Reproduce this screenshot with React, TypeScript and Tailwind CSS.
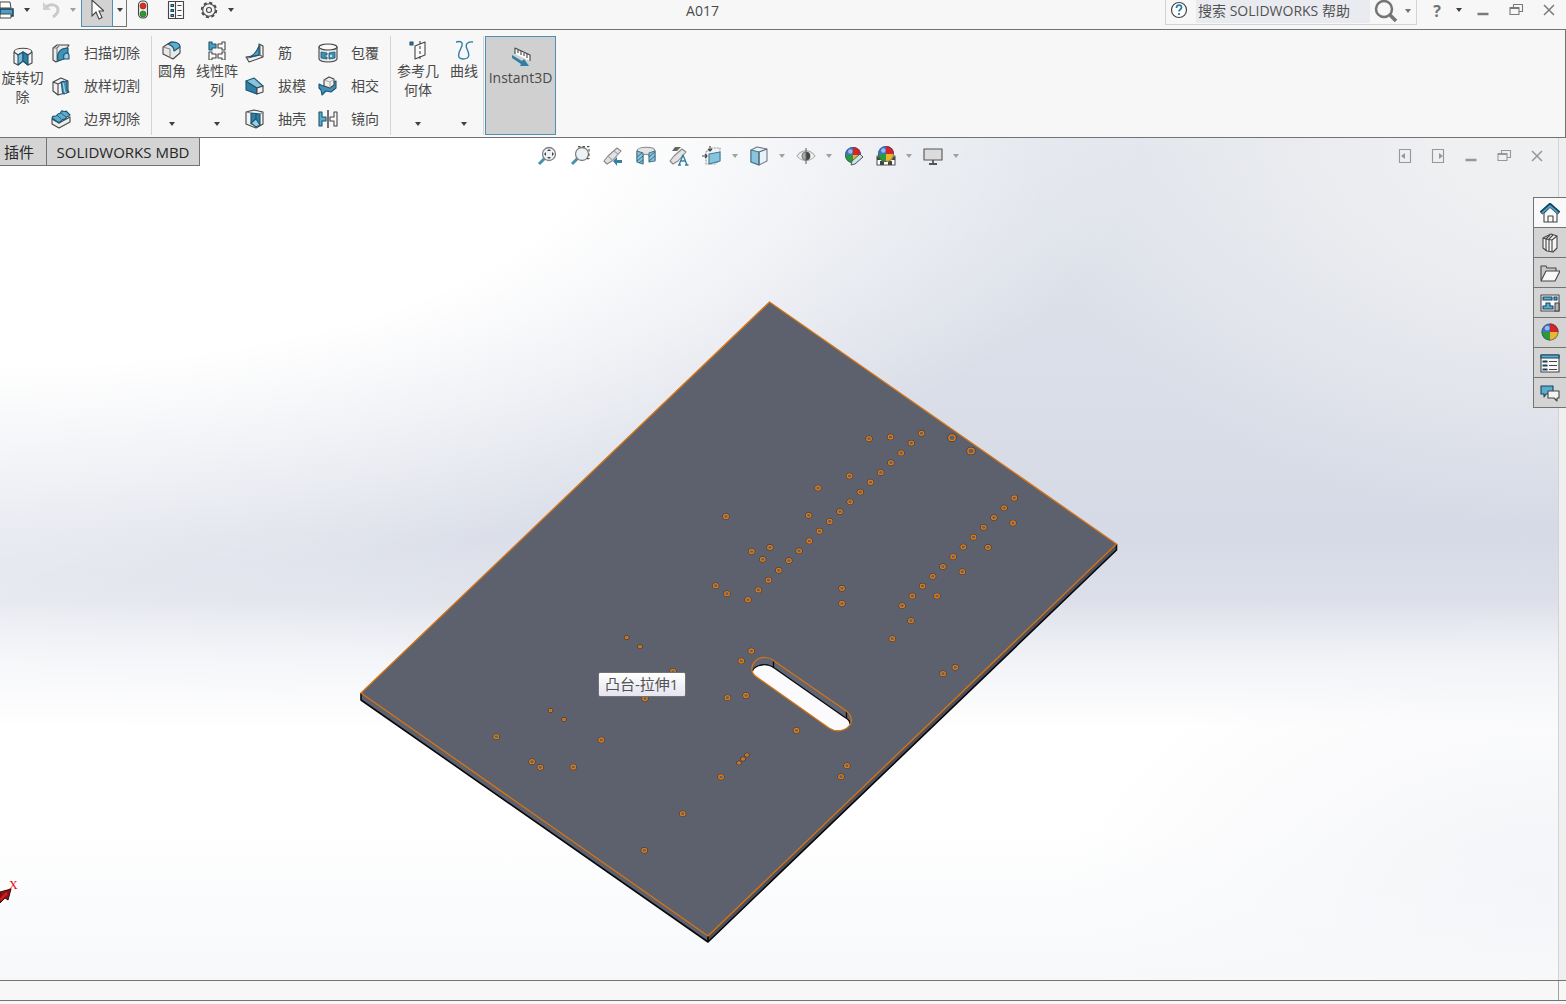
import { useState } from 'react';
import type { ReactNode } from 'react';

interface IconProps {
  size?: string;
  children: ReactNode;
}

// All glyphs are drawn on a 20 x 20 grid
function Glyph({ size = 'w-5 h-5', children }: IconProps) {
  return (
    <svg viewBox="0 0 20 20" className={`${size} shrink-0`} fill="none" stroke="#454545" strokeWidth="1.1" strokeLinejoin="round" aria-hidden="true">
      {children}
    </svg>
  );
}

function Caret({ color = 'text-neutral-700' }: { color?: string }) {
  return (
    <svg viewBox="0 0 6 4" className={`w-[6px] h-1 shrink-0 ${color}`} aria-hidden="true">
      <path d="M0 0h6L3 4z" fill="currentColor" />
    </svg>
  );
}

const RevolveCut = () => (
  <Glyph>
    <path d="M1 5v11l4 2 5-4 5 4 4-2V5c0-5-18-5-18 0z" fill="#f2f2f2" />
    <path d="M1 5l4 3 5-3 5 3 4-3" />
    <path d="M10 5v9l-5 4V8z" fill="#7db9d6" stroke="#1d5470" />
    <path d="M10 5l5 3v10l-5-4z" fill="#2f7ea3" stroke="#1d5470" />
  </Glyph>
);

const SweepCut = () => (
  <Glyph>
    <path d="M2 5l4-3h12l-2 3v3c-5 0-8 3-7 9l-4 2-3-2z" fill="#ececec" />
    <path d="M2 5h4l2-2M6 5v13" stroke="#777" />
    <path d="M7 18C5 9 10 5 17 5v5c-4 0-5 2-4 6z" fill="#3f92b8" stroke="#1d5470" />
    <path d="M13 16c-1-4 0-6 4-6l1 2v4z" fill="#9ccde3" stroke="#1d5470" />
  </Glyph>
);

const LoftCut = () => (
  <Glyph>
    <path d="M2 6l8-4 7 3v11l-3 1-7 2-5-4z" fill="#f2f2f2" />
    <path d="M2 6l5 2v11M7 8l6-3" />
    <path d="M10 6l6-1v9l2 2-5 2c-3-1-1-6-3-12z" fill="#3f92b8" stroke="#1d5470" />
    <path d="M12 7c2 4 0 8 3 10" stroke="#a9d5e8" />
  </Glyph>
);

const BoundaryCut = () => (
  <Glyph>
    <path d="M1 10l7 4 11-6v5l-11 6-7-4z" fill="#eeeeee" />
    <path d="M1 9c1-4 3 0 5-3s3 0 4-3 3 1 5-1l4 4c-2 3-3 0-4 3s-3 0-4 2-2 1-3 3z" fill="#5dabcf" stroke="#1d5470" />
    <path d="M6 6l4 4m0-6l5 4" stroke="#1d5470" strokeWidth=".8" />
  </Glyph>
);

const Fillet = () => (
  <Glyph>
    <path d="M1 7l8-5c6 0 9 3 9 6v5l-7 6-10-5z" fill="#e8e8e8" />
    <path d="M1 7l7 2v9" stroke="#888" />
    <path d="M6 4l4-2c5 0 8 2 8 5l-6 4c0-4-2-5-6-7z" fill="#5dabcf" stroke="#1d5470" />
  </Glyph>
);

const LinearPattern = () => (
  <Glyph>
    <path d="M2 2h3v2h4v4H5v2H2z" fill="#4e9fc3" stroke="#1d5470" />
    <path d="M18 2h-3v2h-4v4h4v2h3zM2 12h3v2h4v4H5v2H2zM18 12h-3v2h-4v4h4v2h3z" fill="#fbfbfb" />
  </Glyph>
);

const Rib = () => (
  <Glyph>
    <path d="M1 14l3 5 14-5V3l-4-2v11z" fill="#f2f2f2" />
    <path d="M1 14l2 1 12-3V2M15 12l3 2" stroke="#666" />
    <path d="M5 14c4-2 7-6 9-11v9z" fill="#4e9fc3" stroke="#1d5470" />
  </Glyph>
);

const Draft = () => (
  <Glyph>
    <path d="M1 5v9l11 4V12z" fill="#2f7ea3" stroke="#1d5470" />
    <path d="M1 5l8-3 9 8-6 2z" fill="#8ac3dc" stroke="#1d5470" />
    <path d="M12 12l6-2v6l-6 2z" fill="#f4f4f4" />
  </Glyph>
);

const Shell = () => (
  <Glyph>
    <path d="M1 3l8-2 9 2v12l-7 4-10-4z" fill="#f2f2f2" />
    <path d="M6 4l9 1v11l-4-3-5 2z" fill="#2f7ea3" stroke="#1d5470" />
    <path d="M6 14l5-4 4 6-4 2zM11 4v6" fill="#9ccde3" stroke="#1d5470" />
    <path d="M1 3l5 1M18 3l-3 2" stroke="#888" />
  </Glyph>
);

const Wrap = () => (
  <Glyph>
    <path d="M1 4v12c2 4 16 4 18 0V4z" fill="#e8e8e8" />
    <ellipse cx="10" cy="4" rx="9" ry="3" fill="#fafafa" />
    <path d="M3 9l6 1v2H7v2h2v2l-6-1zM11 10l6-1v6l-6 1z" fill="#3f92b8" stroke="#1d5470" strokeWidth=".8" />
    <path d="M13 12v2" stroke="#fff" strokeWidth="1.500" />
  </Glyph>
);

const Intersect = () => (
  <Glyph>
    <path d="M1 8l4 2 8-3 5-2v7l-5 4-5-1-4 4-1-5-2-2z" fill="#3f92b8" stroke="#1d5470" />
    <path d="M6 4l5-3 5 2v6l-4 3-6-2z" fill="#efefef" />
    <path d="M6 4l6 2 4-3M12 6v6" stroke="#999" strokeWidth=".8" />
  </Glyph>
);

const Mirror = () => (
  <Glyph>
    <path d="M1 3h3v5h4v4H4v5H1z" fill="#5dabcf" stroke="#1d5470" />
    <path d="M10 1v18" strokeWidth="1.5" />
    <path d="M19 3h-3v5h-4v4h4v5h3z" fill="#fafafa" />
  </Glyph>
);

const ReferenceGeometry = () => (
  <Glyph>
    <path d="M7 6l10-4v13L7 19z" fill="#fafafa" />
    <path d="M12 1v19" strokeDasharray="3 2" />
    <path d="M2 2h3v3H2z" fill="#2f7ea3" stroke="#1d5470" />
  </Glyph>
);

const Curves = () => (
  <Glyph>
    <path d="M2 2c7-2 7 2 5 6s-5 11 2 11c8 0 6-6 4-10s0-8 6-7" stroke="#2f7ea3" strokeWidth="1.4" />
  </Glyph>
);

const Instant = () => (
  <Glyph>
    <path d="M4 7V1l15 7v6" fill="#fafafa" />
    <path d="M7 3v3M10 4v4M13 6v3M16 7v4" />
    <path d="M1 8l10 6 2-2 5 7h-9l1-2-9-6z" fill="#2f7ea3" stroke="none" />
  </Glyph>
);

const Lens = ({ children }: { children?: ReactNode }) => (
  <Glyph>
    <path d="M8 12l-6 6" stroke="#4a8fb0" strokeWidth="3" />
    <circle cx="12" cy="8" r="6.5" fill="#edf2f5" stroke="#808080" strokeWidth="1.300" />
    {children}
  </Glyph>
);

const ZoomFit = () => (
  <Lens>
    <path d="M12 3l2 2h-4zM12 13l2-2h-4zM7 8l2-2v4zM17 8l-2-2v4z" fill="#444" stroke="none" />
  </Lens>
);

const ZoomArea = () => (
  <Lens>
    <path d="M8 .6h11v12h-2" stroke="#555" strokeDasharray="2.500 2" />
  </Lens>
);

const PreviousView = () => (
  <Glyph>
    <path d="M1 15l4-5 9-8 4 3-9 10-5 3z" fill="#e2e2e2" stroke="#888" />
    <path d="M5 10l4 4M11 5l4 3" stroke="#aaa" />
    <path d="M10 15l4-4v3h5v3h-5v3z" fill="#3a7fa0" stroke="none" />
  </Glyph>
);

const SectionView = () => (
  <Glyph>
    <path d="M1 5c0-5 18-5 18 0v9l-5 1-1-6c-2-1-4-1-6 0v8l-6-2z" fill="#e4e4e4" stroke="#888" />
    <path d="M1 5l6 2v11l-6-2zM13 7l6-2v10l-6 1z" fill="#8ac3dc" stroke="#46788f" />
    <path d="M1 11l5-4M1 15l6-5M3 17l4-3M13 11l6-5M13 15l6-5" stroke="#2f6782" strokeWidth=".9" />
  </Glyph>
);

const AnnotationView = () => (
  <Glyph>
    <path d="M1 15l4-5 8-7 4 3-8 9-5 3z" fill="#e2e2e2" stroke="#888" />
    <path d="M6 1h6l-4 4H3z" fill="#666" stroke="none" />
    <path d="M10 19l4-10 4 10M11.500 15h5M9 19h3M16 19h3.500" stroke="#3a7fa0" strokeWidth="1.400" />
  </Glyph>
);

const ViewOrientation = () => (
  <Glyph>
    <path d="M4 6l6-4h8v12l-5 4H4z" fill="#f2f2f2" stroke="#999" strokeDasharray="2 1" />
    <path d="M7 8l11-2v9L7 18z" fill="#8ac3dc" stroke="#3a7fa0" />
    <path d="M8 0v5M6 3l2 2 2-2M0 10h5M3 8l2 2-2 2" stroke="#444" />
  </Glyph>
);

const DisplayStyle = () => (
  <Glyph>
    <path d="M2 4l6-3 10 2v12l-8 4-8-3z" fill="#e6f3f9" stroke="#778" />
    <path d="M2 4l8 2v13l-8-3z" fill="#8ac3dc" stroke="#46788f" />
    <path d="M10 6l8-3M10 6v13" stroke="#567" />
  </Glyph>
);

const HideShow = () => (
  <Glyph>
    <path d="M1 10c5-7 13-7 18 0-5 6-13 6-18 0z" fill="#f2f2f2" stroke="#aaa" />
    <circle cx="10" cy="10" r="4" fill="#a8a8a8" stroke="#777" />
    <path d="M10 6a4 4 0 010 8z" fill="#444" stroke="none" />
    <path d="M10 2v16" stroke="#666" />
  </Glyph>
);

const Ball = ({ r = 9, cy = 10 }: { r?: number; cy?: number }) => (
  <g stroke="none" transform={`translate(10 ${cy}) scale(${r / 9})`}>
    <circle r="9" fill="#3d74d0" />
    <path d="M0 0V-9A9 9 0 019 0z" fill="#d3262b" />
    <path d="M0 0H9A9 9 0 010 9z" fill="#eab62c" />
    <path d="M0 0V9A9 9 0 01-9 0z" fill="#2a9a3c" />
    <circle cx="-3" cy="-4" r="2.500" fill="#fff" opacity=".5" />
    <circle r="8.500" fill="none" stroke="#444" opacity=".5" />
  </g>
);

const EditAppearance = () => (
  <Glyph>
    <Ball r={8} cy={9} />
    <path d="M8 19l1-4 8-7 3 3-8 7z" fill="#c9e5f1" stroke="#555" strokeWidth="1" />
  </Glyph>
);

const ApplyScene = () => (
  <Glyph>
    <path d="M1 10h18v9H1z" fill="#fff" stroke="#555" />
    <path d="M1 11h4v3H1zM15 11h4v3h-4zM4 15h4v4H4zM12 15h4v4h-4z" fill="#444" stroke="none" />
    <Ball r={8} cy={8} />
  </Glyph>
);

const ViewSettings = () => (
  <Glyph>
    <path d="M1 3h18v11H1z" fill="#dcdcdc" stroke="#555" />
    <path d="M10 14v4M6 18h8" stroke="#555" strokeWidth="1.800" />
  </Glyph>
);

const Home = () => (
  <Glyph>
    <path d="M4 10v9h13v-9L10 4z" fill="#fafafa" />
    <path d="M8 19v-6h5v6" />
    <path d="M1 10l9-8 9 8" stroke="#17445c" strokeWidth="4" />
    <path d="M2 10l8-7 8 7" stroke="#4e9fc3" strokeWidth="1.800" />
  </Glyph>
);

const DesignLibrary = () => (
  <Glyph>
    <path d="M3 5l8-4 6 2v12l-4 4-6-1-4-3z" fill="#f4f4f4" />
    <path d="M3 5l3 1v12M6 6l4-4M9 6v12M9 6l4-4M12 7v12M12 7l5-4M6 6l6 1" />
  </Glyph>
);

const FileExplorer = () => (
  <Glyph>
    <path d="M1 17V3h5l1 2h9v3" fill="#c8c8c8" />
    <path d="M1 18L6 8h14l-5 10z" fill="#f8f8f8" />
  </Glyph>
);

const ViewPalette = () => (
  <Glyph>
    <path d="M1 2h18v16H1z" fill="#f8f8f8" />
    <path d="M3 4h9v3H3zM14 4h3v3h-3zM6 10h4v3h3v3H3v-3h3z" fill="#5dabcf" stroke="#17445c" />
    <path d="M15 18v-8h4v8z" fill="#b5b5b5" />
  </Glyph>
);

const Appearances = () => (
  <Glyph>
    <Ball r={8.5} cy={9} />
  </Glyph>
);

const CustomProperties = () => (
  <Glyph>
    <path d="M1 2h18v17H1z" fill="#f8f8f8" />
    <path d="M1 2h18v3H1z" fill="#5dabcf" stroke="#17445c" />
    <path d="M3 8h4v1H3zM3 12h4v1H3zM3 16h4v1H3z" fill="#4e9fc3" stroke="#17445c" />
    <path d="M9 8.500h8M9 12.500h8M9 16.500h8" />
  </Glyph>
);

const Forum = () => (
  <Glyph>
    <path d="M1 3h12v8H6l-2 3v-3H1z" fill="#5dabcf" stroke="#17445c" />
    <path d="M8 8h11v7h-2v3l-3-3H8z" fill="#f4f4f4" />
  </Glyph>
);

const cutTools = [
  { label: '扫描切除', icon: SweepCut },
  { label: '放样切割', icon: LoftCut },
  { label: '边界切除', icon: BoundaryCut },
];

const featureTools = [
  { label: '筋', icon: Rib },
  { label: '拔模', icon: Draft },
  { label: '抽壳', icon: Shell },
];

const bodyTools = [
  { label: '包覆', icon: Wrap },
  { label: '相交', icon: Intersect },
  { label: '镜向', icon: Mirror },
];

const viewTools = [
  { label: '整屏显示全图', icon: ZoomFit, menu: false },
  { label: '局部放大', icon: ZoomArea, menu: false },
  { label: '上一视图', icon: PreviousView, menu: false },
  { label: '剖面视图', icon: SectionView, menu: false },
  { label: '动态注解视图', icon: AnnotationView, menu: false },
  { label: '视图定向', icon: ViewOrientation, menu: true },
  { label: '显示样式', icon: DisplayStyle, menu: true },
  { label: '隐藏/显示项目', icon: HideShow, menu: true },
  { label: '编辑外观', icon: EditAppearance, menu: false },
  { label: '应用布景', icon: ApplyScene, menu: true },
  { label: '视图设定', icon: ViewSettings, menu: true },
];

const paneTabs = [
  { label: 'SOLIDWORKS 资源', icon: Home },
  { label: '设计库', icon: DesignLibrary },
  { label: '文件探索器', icon: FileExplorer },
  { label: '视图调色板', icon: ViewPalette },
  { label: '外观、布景和贴图', icon: Appearances },
  { label: '自定义属性', icon: CustomProperties },
  { label: 'SOLIDWORKS Forum', icon: Forum },
];

type Hole = [x: number, y: number, r?: number];

const lineOfHoles = (x: number, y: number, dx: number, dy: number, count: number): Hole[] =>
  Array.from({ length: count }, (_, i) => [x + dx * i, y + dy * i]);

const holes: Hole[] = [
  ...lineOfHoles(921.5, 433.3, -10.2, 9.79, 18),
  ...lineOfHoles(1014.3, 498, -10.2, 9.79, 12),
  [869, 438.7], [890.5, 437], [952, 437.7, 3.2], [971, 451, 3.2], [849.5, 476], [818, 488],
  [808.7, 515.3], [726, 516.5], [751.7, 551.5], [770, 547.3], [762.7, 559.3], [715.7, 585.7],
  [727, 593.7], [842, 588.3], [842, 603.5], [1013, 523], [988, 547.3], [962.3, 571.7],
  [937, 596], [911, 620.7], [626.7, 637.5, 1.4], [640, 646.7, 1.4], [673, 671.5], [645, 698.5],
  [751.3, 651], [741.3, 661], [892.3, 638.7], [955.3, 667.3], [943, 673.7], [727.5, 697.7],
  [746, 695.5], [796.5, 730.5], [601.3, 740], [747, 755, 1.4], [743, 759, 1.4], [739, 763, 1.4],
  [721, 777], [847, 765.7], [841, 776.7], [550.5, 710.5, 1.4], [564, 719.5, 1.4], [496.3, 736.7],
  [532, 761.7], [540.3, 767.3], [573.3, 767], [682.7, 813.7], [644.3, 850.3],
];

function ToolColumn({ tools, width }: { tools: typeof cutTools; width: string }) {
  return (
    <div className={`flex flex-col ${width}`}>
      {tools.map(({ label, icon: Icon }) => (
        <button key={label} className="flex h-[33px] items-center gap-[13px] text-sm">
          <Icon />
          {label}
        </button>
      ))}
    </div>
  );
}

function LargeTool({ label, icon, width, menu = true }: { label: string; icon: ReactNode; width: string; menu?: boolean }) {
  return (
    <button className={`flex h-[99px] flex-col items-center pt-1 text-sm leading-[19px] ${width}`}>
      {icon}
      <span className="mt-px">{label}</span>
      {menu && <span className="mt-auto pb-[9px]"><Caret /></span>}
    </button>
  );
}

function TitleBar() {
  const [query, setQuery] = useState('');

  return (
    <header className="flex h-[30px] shrink-0 items-start border-b border-neutral-500 bg-[#f7f7f7]">
      <div className="flex h-5 items-center">
        <button aria-label="打印" className="w-[14px] overflow-hidden">
          <svg viewBox="0 0 14 20" className="h-5 w-[14px]" aria-hidden="true">
            <path d="M0 2h10l1 6H0z" fill="#fff" stroke="#444" />
            <path d="M0 9h13v7H0z" fill="#4e9fc3" stroke="#17445c" strokeWidth="1.5" />
            <path d="M0 14h11v4H0z" fill="#fff" stroke="#444" />
          </svg>
        </button>
        <button aria-label="打印选项" className="ml-[10px]"><Caret /></button>
        <button aria-label="撤消" className="ml-[11px]">
          <Glyph>
            <path d="M2 2v8h8z" fill="#d0d0d0" stroke="none" />
            <path d="M5 7c5-4 12-2 12 3 0 3-2 5-5 7" stroke="#cacaca" strokeWidth="3" />
          </Glyph>
        </button>
        <button aria-label="撤消列表" className="ml-[9px]"><Caret color="text-neutral-400" /></button>
      </div>
      <div className="ml-[5px] flex h-[27px]">
        <button aria-label="选择" className="flex w-8 justify-center border border-t-0 border-[#4f8fb5] bg-[#d2d2d2]">
          <svg viewBox="0 0 14 20" className="h-5 w-[14px]" aria-hidden="true">
            <path d="M2 0v16l4-4 3 7 3-1.500-3-6.500h5z" fill="#fff" stroke="#444" strokeWidth="1.100" />
          </svg>
        </button>
        <button aria-label="选择选项" className="flex w-[14px] items-start justify-center border-r border-b border-neutral-500 pt-2"><Caret /></button>
      </div>
      <div className="flex h-5 items-center">
        <button aria-label="重建模型" className="ml-[6px]">
          <Glyph>
            <rect x="5.500" y="1" width="9" height="17" rx="4" fill="#e8e8e8" />
            <circle cx="10" cy="6" r="3" fill="#d8321c" stroke="#8b1a10" strokeWidth=".6" />
            <circle cx="10" cy="14" r="3" fill="#2f9a2f" stroke="#1b601b" strokeWidth=".6" />
          </Glyph>
        </button>
        <button aria-label="文件属性" className="ml-[13px]">
          <Glyph>
            <path d="M2.500 1.500h15v17h-15z" fill="#fafafa" />
            <path d="M5 4.500h2.500v2H5zM5 9.500h2.500v2H5zM5 14.500h2.500v2H5z" fill="#5dabcf" stroke="#17445c" />
            <path d="M9.500 2v16M11.500 5.500h4M11.500 10.500h4M11.500 15.500h4" />
          </Glyph>
        </button>
        <button aria-label="选项" className="ml-[13px]">
          <Glyph>
            <circle cx="10" cy="10" r="7.300" strokeWidth="1.800" strokeDasharray="3.100 2.630" />
            <circle cx="10" cy="10" r="6.300" fill="#f4f4f4" />
            <circle cx="10" cy="10" r="2.500" />
          </Glyph>
        </button>
        <button aria-label="选项列表" className="ml-[9px]"><Caret /></button>
      </div>

      <h1 className="flex-1 pl-[6px] text-center text-sm leading-[22px]">A017</h1>

      <div className="flex h-[25px] w-[252px] border border-t-0 border-neutral-300">
        <svg viewBox="0 0 20 20" className="ml-[3px] h-5 w-5" aria-hidden="true">
          <circle cx="10" cy="10" r="7.500" fill="#fff" stroke="#444" strokeWidth="1.200" />
          <path d="M7.500 8c0-4 5-3.500 5-.5 0 2-2.500 2-2.500 4M10 13v2" fill="none" stroke="#2f7ea3" strokeWidth="1.800" />
        </svg>
        <input
          type="search"
          aria-label="搜索 SOLIDWORKS 帮助"
          placeholder="搜索 SOLIDWORKS 帮助"
          value={query}
          onChange={(e) => setQuery(e.target.value)}
          className="ml-[7px] h-[23px] w-[174px] bg-[#e9ebf0] px-[2px] pb-[2px] text-sm text-neutral-600 outline-none placeholder:text-neutral-600"
        />
        <button aria-label="搜索" className="ml-1 h-6">
          <svg viewBox="0 0 24 24" className="h-6 w-6" aria-hidden="true">
            <circle cx="10" cy="9" r="8" fill="none" stroke="#757575" strokeWidth="2.500" />
            <path d="M16 15l6 6" stroke="#757575" strokeWidth="3.500" />
          </svg>
        </button>
        <button aria-label="搜索选项" className="ml-[7px] flex h-[22px] items-center"><Caret color="text-neutral-500" /></button>
      </div>
      <button aria-label="帮助" className="ml-[14px] w-3 text-base leading-[22px] font-bold text-neutral-500">?</button>
      <button aria-label="帮助选项" className="ml-[13px] flex h-5 items-center"><Caret /></button>
      <div className="ml-[11px] flex gap-[13px] pr-[7px]">
        <WindowControls />
      </div>
    </header>
  );
}

function WindowControls() {
  return (
    <>
      <button aria-label="最小化">
        <Glyph>
          <path d="M4.500 14h11" stroke="#7a7a7a" strokeWidth="2.500" />
        </Glyph>
      </button>
      <button aria-label="还原">
        <Glyph>
          <path d="M7.500 7V4.500h9v7H13" stroke="#7a7a7a" />
          <path d="M4 7.500h9v7H4zM4 8.500h9" stroke="#7a7a7a" />
        </Glyph>
      </button>
      <button aria-label="关闭">
        <Glyph>
          <path d="M5 5l10 10M15 5L5 15" stroke="#7a7a7a" strokeWidth="1.500" />
        </Glyph>
      </button>
    </>
  );
}

function Ribbon() {
  return (
    <nav aria-label="特征" className="flex h-[108px] shrink-0 items-start border-r border-b border-neutral-500 bg-[#f7f7f7] pt-[6px]">
      <div className="pt-[7px]">
        <LargeTool label="旋转切除" icon={<RevolveCut />} width="w-[45px]" menu={false} />
      </div>
      <div className="flex border-r border-neutral-300 pl-[6px]">
        <ToolColumn tools={cutTools} width="w-[100px]" />
      </div>
      <div className="flex border-r border-neutral-300">
        <LargeTool label="圆角" icon={<Fillet />} width="w-10" />
        <LargeTool label="线性阵列" icon={<LinearPattern />} width="w-[50px]" />
        <div className="w-[3px]" />
        <ToolColumn tools={featureTools} width="w-[73px]" />
        <ToolColumn tools={bodyTools} width="w-[72px]" />
      </div>
      <div className="flex border-r border-neutral-300">
        <LargeTool label="参考几何体" icon={<ReferenceGeometry />} width="w-[54px] px-[5px]" />
        <LargeTool label="曲线" icon={<Curves />} width="w-[38px]" />
      </div>
      <button className="ml-px flex h-[99px] w-[71px] flex-col items-center border border-[#4f8fb5] bg-[#d0d0d0] pt-[10px] text-sm leading-[19px]">
        <Instant />
        <span className="mt-px">Instant3D</span>
      </button>
    </nav>
  );
}

function Plate() {
  return (
    <svg viewBox="0 138 1558 842" className="absolute inset-0 h-full w-full" fill="none" strokeLinejoin="round" role="img" aria-label="A017">
      <path d="M769.500 302L1116.500 544V550L708 942L361 700V693z" fill="#5d616d" />
      <path d="M1116.500 544V550L708 942V936z" fill="#4d505c" />
      <path d="M361 693V700L708 942L1116.500 550V544M708 936V942" stroke="#08080c" strokeWidth="1.600" />
      <path d="M769.500 302L1116.500 544L708 936L361 693z" stroke="#d87410" strokeWidth="1.300" />

      {/* Slot */}
      <path d="M752 670C751 663 758 657 765 657.500C769 657.500 772 659 774 661L845 710C851 714 853 720 850 725C846 731 836 733 829 728L756 676.500C753 674 752 672 752 670z" fill="#616573" />
      <path d="M752.500 671C754 666 762 664 768 665C771 666 773 667 775 668.500L845 717.500C848 719 850 722 850 724C846 731 836 732 829 728L757 677C754 675 752.500 673 752.500 671z" fill="#fbfbfd" />
      <path d="M752.500 671C754 666 762 664 768 665C771 666 773 667 775 668.500L845 717.500C848 719 850 722 850 724M773.500 661V668M846.500 711V718" stroke="#08080c" strokeWidth="1.300" />
      <path d="M752 670C751 663 758 657 765 657.500C769 657.500 772 659 774 661L845 710C851 714 853 720 850 725C846 731 836 733 829 728L756 676.500C753 674 752 672 752 670z" stroke="#d87410" strokeWidth="1.200" />

      {holes.map(([x, y, r = 2.3]) => (
        <g key={`${x}-${y}`}>
          <ellipse cx={x} cy={y} rx={r + 0.9} ry={r + 0.5} stroke="#3b2c22" strokeWidth="0.8" />
          <ellipse cx={x} cy={y} rx={r} ry={r - 0.3} stroke="#e27a10" strokeWidth="1.300" />
        </g>
      ))}

      {/* Triad arrow */}
      <path d="M0 892L11 889L8 900L5 898L0 903z" fill="#8d1214" stroke="#3a0a0c" strokeWidth="1" />
      <path d="M0 900L7 893" stroke="#d01c1c" strokeWidth="2.500" />
    </svg>
  );
}

export default function App() {
  const [activePane, setActivePane] = useState(0);

  return (
    <div className="flex h-screen flex-col overflow-hidden bg-[#f7f7f7] font-['Open_Sans','Noto_Sans_CJK_SC',sans-serif] text-[#4a4a4a]">
      <TitleBar />
      <Ribbon />

      <main className="relative flex min-h-0 flex-1 bg-[#efefef] pr-[7px]">
        <section
          aria-label="图形区域"
          className="relative flex-1 border-r border-neutral-300 bg-[linear-gradient(to_bottom,transparent_82%,#f6f8fa_100%),radial-gradient(ellipse_32%_36%_at_100%_92%,#f2f3f7,transparent),linear-gradient(to_bottom,transparent_55%,#ffffff99_62%,#ffffff_70%),radial-gradient(ellipse_76%_54%_at_0%_0%,#ffffff_50%,#ffffff77_74%,transparent_97%),radial-gradient(ellipse_34%_46%_at_100%_0%,#eff0f2_20%,transparent),linear-gradient(to_right,#ffffff55,transparent_55%),linear-gradient(to_bottom,#e0e4eb,#d6dae6_47%,#dee1eb_57%)]"
        >
          <Plate />

          <div className="relative flex items-start">
            <div role="tablist" className="flex h-7 border-b border-neutral-500 bg-[#d4d4d4] leading-[26px] text-neutral-800">
              <button role="tab" className="w-[47px] border-r border-neutral-500 pr-2 text-[15px]">插件</button>
              <button role="tab" className="w-[153px] border-r border-neutral-500 text-[15px]">SOLIDWORKS MBD</button>
            </div>
            <div role="toolbar" aria-label="视图" className="ml-[331px] flex h-9 items-center">
              {viewTools.map(({ label, icon: Icon, menu }) => (
                <button key={label} aria-label={label} className={`flex items-center ${menu ? 'w-[47px]' : 'w-[33px]'} gap-[10px] pl-[6px]`}>
                  <Icon />
                  {menu && <Caret color="text-neutral-400" />}
                </button>
              ))}
            </div>
            <div className="ml-auto flex h-9 items-center gap-[13px] pr-[11px] opacity-75">
              <button aria-label="左窗格">
                <Glyph>
                  <path d="M4.500 3.500h11v13h-11z" stroke="#7a7a7a" />
                  <path d="M10 7v6l-4-3z" fill="#7a7a7a" stroke="none" />
                </Glyph>
              </button>
              <button aria-label="右窗格">
                <Glyph>
                  <path d="M4.500 3.500h11v13h-11z" stroke="#7a7a7a" />
                  <path d="M11 7v6l4-3z" fill="#7a7a7a" stroke="none" />
                </Glyph>
              </button>
              <WindowControls />
            </div>
          </div>

          <div role="tooltip" className="absolute top-[534px] left-[598px] rounded-xs border border-neutral-500 bg-linear-to-b from-white to-[#e4e5f0] pr-[7px] pl-[6px] text-[15px] leading-[23px] whitespace-nowrap text-neutral-600">
            凸台-拉伸1
          </div>
          <span className="absolute bottom-[87px] left-[9px] font-['Liberation_Serif',serif] text-xs leading-4 text-red-600">X</span>
        </section>

        <aside aria-label="任务窗格" className="absolute top-[59px] right-0 flex flex-col border-b border-l border-neutral-500">
          {paneTabs.map(({ label, icon: Icon }, index) => (
            <button
              key={label}
              aria-label={label}
              onClick={() => setActivePane(index)}
              className={`flex h-[30px] w-8 items-center justify-center border-t border-neutral-500 ${
                activePane === index ? 'bg-[#f9f9f9]' : 'bg-[#d4d4d4]'
              }`}
            >
              <Icon />
            </button>
          ))}
        </aside>
      </main>

      <footer className="h-6 shrink-0 border-t border-neutral-500">
        <div className="h-5 border-b border-neutral-500 pr-[7px]">
          <div className="h-full border-r border-neutral-400" />
        </div>
      </footer>
    </div>
  );
}
